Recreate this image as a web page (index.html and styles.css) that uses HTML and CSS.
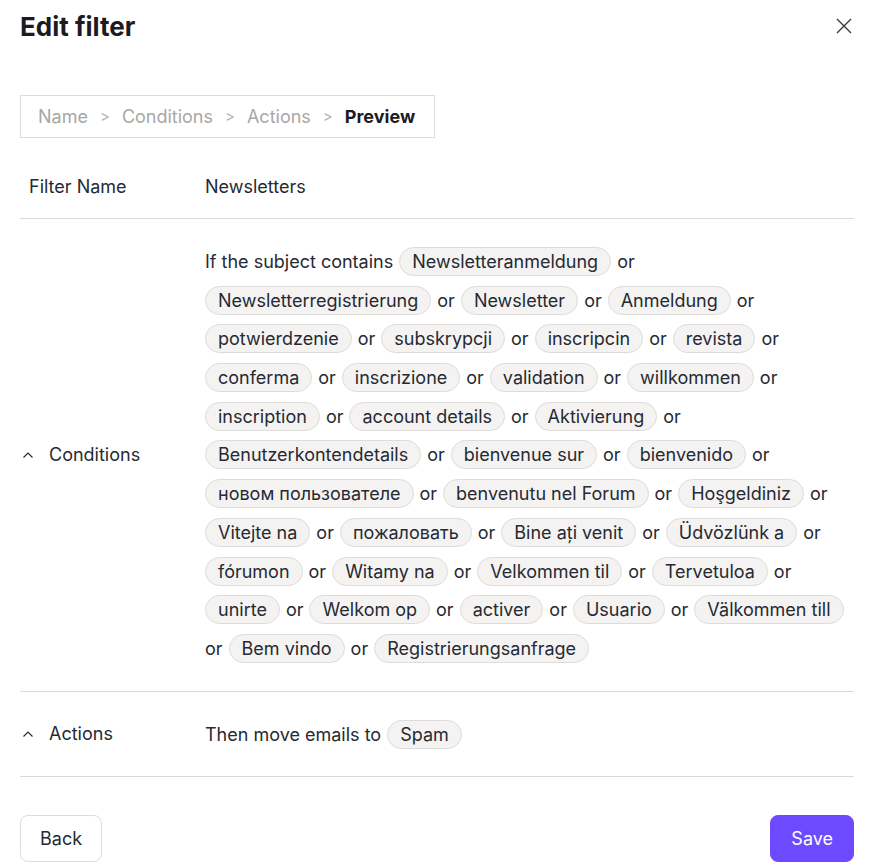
FILE: index.html
```html
<!DOCTYPE html>
<html lang="en">
<head>
    <meta charset="UTF-8">
    <title>Edit filter</title>
    <link rel="stylesheet" href="styles.css">
</head>
<body>
    <div class="modal">
        <div class="modal-header">
            <h1 class="title">Edit filter</h1>
            <button class="close" aria-label="Close">
                <svg width="16" height="16" viewBox="0 0 16 16"><path d="M1 1L15 15M15 1L1 15" stroke="#3b3b3b" stroke-width="1.4" fill="none"/></svg>
            </button>
        </div>

        <!--步骤导航-->
        <div class="steps">
            <span class="step">Name</span>
            <span class="sep">&gt;</span>
            <span class="step">Conditions</span>
            <span class="sep">&gt;</span>
            <span class="step">Actions</span>
            <span class="sep">&gt;</span>
            <span class="step current">Preview</span>
        </div>

        <div class="row name-row">
            <div class="label">Filter Name</div>
            <div class="value">Newsletters</div>
        </div>

        <div class="row">
            <div class="label">
                <svg class="chev" width="12" height="8" viewBox="0 0 12 8"><path d="M1.5 6.5L6 2L10.5 6.5" stroke="#2b2b2b" stroke-width="1.2" fill="none"/></svg>
                Conditions
            </div>
            <div class="value tokens">
                <span>If the subject contains</span>
                <span class="chip">Newsletteranmeldung</span><span>or</span>
                <span class="chip">Newsletterregistrierung</span><span>or</span>
                <span class="chip">Newsletter</span><span>or</span>
                <span class="chip">Anmeldung</span><span>or</span>
                <span class="chip">potwierdzenie</span><span>or</span>
                <span class="chip">subskrypcji</span><span>or</span>
                <span class="chip">inscripcin</span><span>or</span>
                <span class="chip">revista</span><span>or</span>
                <span class="chip">conferma</span><span>or</span>
                <span class="chip">inscrizione</span><span>or</span>
                <span class="chip">validation</span><span>or</span>
                <span class="chip">willkommen</span><span>or</span>
                <span class="chip">inscription</span><span>or</span>
                <span class="chip">account details</span><span>or</span>
                <span class="chip">Aktivierung</span><span>or</span>
                <span class="chip">Benutzerkontendetails</span><span>or</span>
                <span class="chip">bienvenue sur</span><span>or</span>
                <span class="chip">bienvenido</span><span>or</span>
                <span class="chip">новом пользователе</span><span>or</span>
                <span class="chip">benvenutu nel Forum</span><span>or</span>
                <span class="chip">Hoşgeldiniz</span><span>or</span>
                <span class="chip">Vitejte na</span><span>or</span>
                <span class="chip">пожаловать</span><span>or</span>
                <span class="chip">Bine ați venit</span><span>or</span>
                <span class="chip">Üdvözlünk a</span><span>or</span>
                <span class="chip">fórumon</span><span>or</span>
                <span class="chip">Witamy na</span><span>or</span>
                <span class="chip">Velkommen til</span><span>or</span>
                <span class="chip">Tervetuloa</span><span>or</span>
                <span class="chip">unirte</span><span>or</span>
                <span class="chip">Welkom op</span><span>or</span>
                <span class="chip">activer</span><span>or</span>
                <span class="chip">Usuario</span><span>or</span>
                <span class="chip">Välkommen till</span><span>or</span>
                <span class="chip">Bem vindo</span><span>or</span>
                <span class="chip">Registrierungsanfrage</span>
            </div>
        </div>

        <div class="row actions-row">
            <div class="label">
                <svg class="chev" width="12" height="8" viewBox="0 0 12 8"><path d="M1.5 6.5L6 2L10.5 6.5" stroke="#2b2b2b" stroke-width="1.2" fill="none"/></svg>
                Actions
            </div>
            <div class="value tokens">
                <span>Then move emails to</span>
                <span class="chip">Spam</span>
            </div>
        </div>

        <div class="footer">
            <button class="btn">Back</button>
            <button class="btn primary">Save</button>
        </div>
    </div>
</body>
</html>
```

FILE: styles.css
```css
*{
    margin: 0;
    padding: 0;
    box-sizing: border-box;
}
body{
    background-color: #fff;
    font-family: Inter, "Liberation Sans", sans-serif;
    font-size: 18px;
    color: #262a33;
}
.modal{
    width: 888px;
    padding: 12px 34px 0 20px;
}
.modal-header{
    display: flex;
    justify-content: space-between;
    align-items: center;
    height: 28px;
}
.modal-header .title{
    font-size: 26px;
    font-weight: 700;
    color: #1c1b22;
}
.modal-header .close{
    border: none;
    background: transparent;
    width: 16px;
    height: 16px;
    margin-right: 2px;
    display: flex;
}
/*步骤导航*/
.steps{
    display: inline-flex;
    align-items: center;
    gap: 12px;
    height: 43px;
    margin-top: 55px;
    padding: 0 19px 0 17px;
    border: 1px solid #dcdcdc;
    font-size: 18px;
    color: #a7a7a7;
}
.steps .sep{
    font-size: 15px;
    color: #b5b5b5;
}
.steps .current{
    color: #1c1b22;
    font-weight: 700;
}
.row{
    display: flex;
    align-items: center;
    padding: 28px 0;
    border-bottom: 1px solid #d9d9d9;
}
.name-row{
    padding: 23px 0 19px;
    margin-top: 14px;
}
.actions-row{
    padding: 28px 0 27px;
}
.row .label{
    width: 185px;
    flex-shrink: 0;
    padding-left: 9px;
    display: flex;
    align-items: center;
    line-height: 24px;
}
.row .label .chev{
    margin-left: -7px;
    margin-right: 15px;
}
.row .value{
    flex: 1;
    line-height: 24px;
}
.tokens{
    display: flex;
    flex-wrap: wrap;
    align-items: center;
    column-gap: 6px;
    row-gap: 9.7px;
}
.tokens span{
    line-height: 29px;
}
.tokens .chip{
    display: inline-block;
    height: 29px;
    line-height: 27px;
    padding: 0 12px;
    border: 1px solid #dedcda;
    border-radius: 15px;
    background-color: #f4f3f2;
}
.footer{
    display: flex;
    justify-content: space-between;
    margin-top: 38px;
}
.btn{
    height: 47px;
    padding: 0 19px;
    font-family: inherit;
    font-size: 18px;
    color: #262a33;
    background-color: #fff;
    border: 1px solid #dcdcdc;
    border-radius: 8px;
}
.btn.primary{
    padding: 0 20px;
    background-color: #6d4aff;
    border-color: #6d4aff;
    color: #fff;
}
```
